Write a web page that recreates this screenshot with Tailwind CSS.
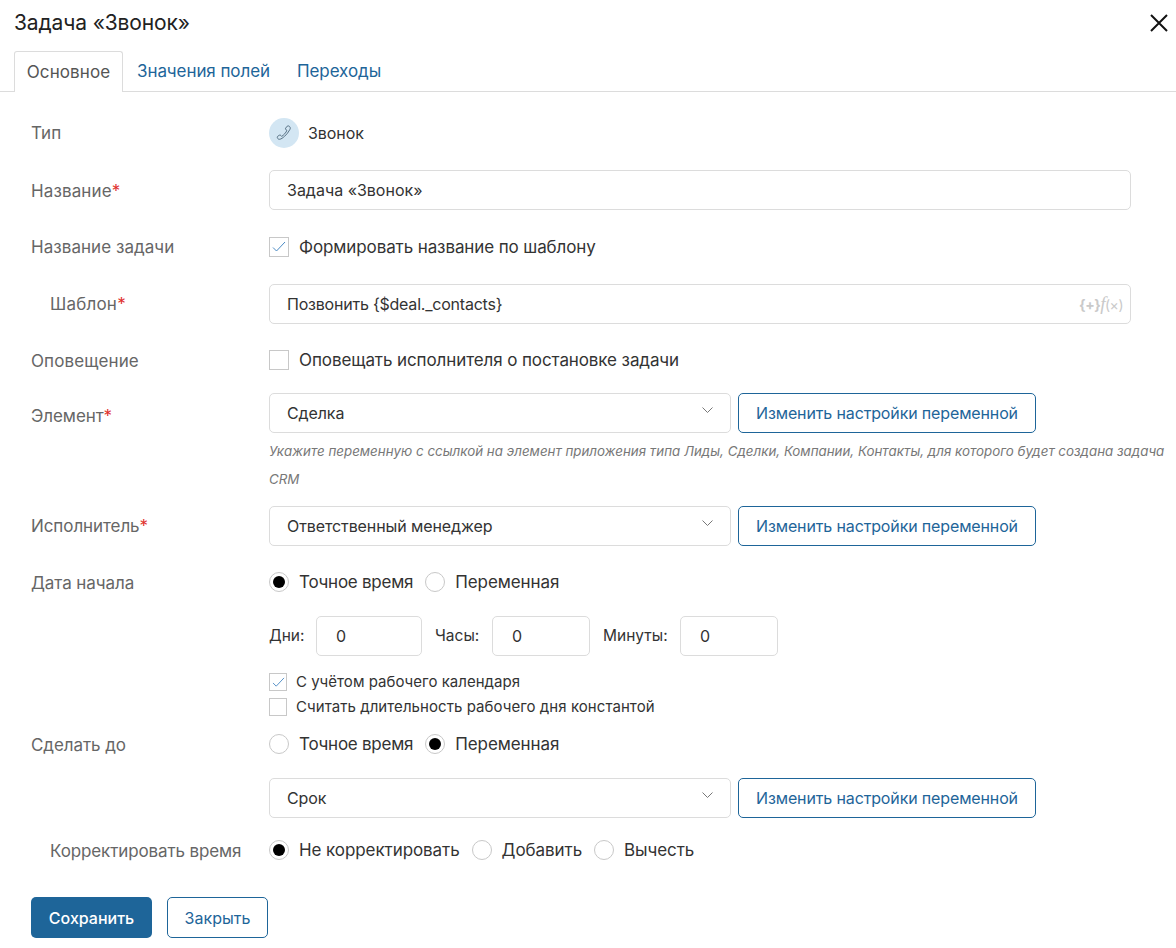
<!DOCTYPE html>
<html lang="ru">
<head>
<meta charset="utf-8">
<script src="https://cdn.jsdelivr.net/npm/@tailwindcss/browser@4"></script>
</head>
<body class="bg-white font-['Inter',sans-serif] text-[17px] tracking-[-0.08px] text-[#333] w-[1176px] h-[948px] overflow-hidden">
<header class="h-[51px] pl-[14px] pr-[8px] flex items-start justify-between">
  <h1 class="text-[21px] tracking-[-0.13px] leading-[24px] mt-[11px] text-[#222] font-normal">Задача «Звонок»</h1>
  <svg class="mt-[14px]" width="18" height="18" viewBox="0 0 18 18" fill="none" stroke="#111" stroke-width="2"><path d="M1 1l16 16M17 1L1 17"/></svg>
</header>
<nav class="h-[41px] pl-[14px] flex border-b border-[#dcdcdc]">
  <div class="h-[41px] w-[109px] pt-[2px] flex items-center justify-center border border-b-0 border-[#dcdcdc] rounded-t-[3px] bg-white text-[#555] tracking-[0.1px]">Основное</div>
  <a class="ml-[14px] h-[40px] pt-[2px] flex items-center text-[#1e6599]">Значения полей</a>
  <a class="ml-[27px] h-[40px] pt-[2px] flex items-center text-[#1e6599]">Переходы</a>
</nav>
<main class="pl-[31px]">
  <div class="flex items-center h-[40px] mt-[21px]">
    <div class="w-[238px] pt-[2px] text-[#666] tracking-[0.1px]">Тип</div>
    <span class="w-[30px] h-[30px] rounded-full bg-[#d3e6f3] flex items-center justify-center">
      <svg width="16" height="16" viewBox="0 0 16 16" fill="none" stroke="#4a6478" stroke-width="0.9"><path d="M11.2 1.2c1-.6 1.900-.3 2.600.6.7.9.6 1.900-.1 3-1.300 2.400-3 4.700-5.100 6.500-1.700 1.500-3.400 2.800-5 3-1 .1-1.900-.5-2.200-1.400-.3-.8 0-1.500.7-1.900l1.300-.8c.6-.3 1.100-.2 1.500.3l.7.9c1.800-.9 4.600-4 5.300-6l-1-.7c-.5-.4-.6-.9-.3-1.500z"/></svg>
    </span>
    <span class="ml-[9px] text-[16px] text-[#333]">Звонок</span>
  </div>
  <div class="flex items-center h-[40px] mt-[17px]">
    <div class="w-[238px] pt-[4px] text-[#666] tracking-[0.12px]">Название<span class="text-[#e0312d]">*</span></div>
    <div class="w-[862px] h-[40px] border border-[#dcdcdc] rounded-[5px] pl-[17px] flex items-center text-[16px] tracking-[0px]">Задача «Звонок»</div>
  </div>
  <div class="flex items-center h-[24px] mt-[25px]">
    <div class="w-[238px] pt-[2px] text-[#666] tracking-[0.05px]">Название задачи</div>
    <span class="w-[20px] h-[20px] border border-[#c8c8c8] flex items-center justify-center">
      <svg width="14" height="12" viewBox="0 0 14 12" fill="none" stroke="#4a8ac4" stroke-width="1"><path d="M1 6.500l3.500 3.500L13 1"/></svg>
    </span>
    <span class="ml-[10px] pt-[2px] tracking-[-0.11px]">Формировать название по шаблону</span>
  </div>
  <div class="flex items-center h-[40px] mt-[25px]">
    <div class="w-[238px] pl-[19px] pt-[2px] text-[#666] tracking-[0.2px]">Шаблон<span class="text-[#e0312d]">*</span></div>
    <div class="w-[862px] h-[40px] border border-[#dcdcdc] rounded-[5px] pl-[17px] pr-[7px] flex items-center justify-between">
      <span class="text-[16px] tracking-[-0.22px]">Позвонить {$deal._contacts}</span>
      <span class="text-[14px] leading-[16px] tracking-[-0.5px] text-[#c9c9c9]"><b>{+}</b><i class="font-['Liberation_Serif',serif] text-[19px]">f</i>(×)</span>
    </div>
  </div>
  <div class="flex items-center h-[24px] mt-[24px]">
    <div class="w-[238px] pt-[4px] text-[#666] tracking-[0.12px]">Оповещение</div>
    <span class="w-[20px] h-[20px] border border-[#c8c8c8]"></span>
    <span class="ml-[10px] pt-[2px] tracking-[-0.1px]">Оповещать исполнителя о постановке задачи</span>
  </div>
  <div class="flex items-center h-[40px] mt-[21px]">
    <div class="w-[238px] pt-[8px] text-[#666]">Элемент<span class="text-[#e0312d]">*</span></div>
    <div class="w-[462px] h-[40px] border border-[#dcdcdc] rounded-[5px] pl-[17px] pr-[17px] flex items-center justify-between text-[16px] tracking-[-0.1px]">
      <span>Сделка</span>
      <svg class="mt-[-6px]" width="11" height="6" viewBox="0 0 11 6" fill="none" stroke="#777" stroke-width="1"><path d="M.5.5l5 5 5-5"/></svg>
    </div>
    <button class="ml-[7px] w-[298px] h-[40px] border border-[#1e6599] rounded-[5px] text-[#1e6599] text-[16px] tracking-[-0.14px]">Изменить настройки переменной</button>
  </div>
  <p class="ml-[238px] mt-[4px] w-[900px] text-[13.35px] tracking-[0px] leading-[28px] italic text-[#777]">Укажите переменную с ссылкой на элемент приложения типа Лиды, Сделки, Компании, Контакты, для которого будет создана задача CRM</p>
  <div class="flex items-center h-[40px] mt-[13px]">
    <div class="w-[238px] pt-[2px] text-[#666]">Исполнитель<span class="text-[#e0312d]">*</span></div>
    <div class="w-[462px] h-[40px] border border-[#dcdcdc] rounded-[5px] pl-[17px] pr-[17px] flex items-center justify-between text-[16px] tracking-[-0.1px]">
      <span>Ответственный менеджер</span>
      <svg class="mt-[-6px]" width="11" height="6" viewBox="0 0 11 6" fill="none" stroke="#777" stroke-width="1"><path d="M.5.5l5 5 5-5"/></svg>
    </div>
    <button class="ml-[7px] w-[298px] h-[40px] border border-[#1e6599] rounded-[5px] text-[#1e6599] text-[16px] tracking-[-0.14px]">Изменить настройки переменной</button>
  </div>
  <div class="flex items-center h-[24px] mt-[24px]">
    <div class="w-[238px] pt-[4px] text-[#666]">Дата начала</div>
    <span class="w-[20px] h-[20px] rounded-full border border-[#c8c8c8] flex items-center justify-center"><span class="w-[12px] h-[12px] rounded-full bg-black"></span></span>
    <span class="ml-[10px] pt-[2px] tracking-[-0.25px]">Точное время</span>
    <span class="ml-[12px] w-[20px] h-[20px] rounded-full border border-[#c8c8c8]"></span>
    <span class="ml-[10px] pt-[2px]">Переменная</span>
  </div>
  <div class="flex items-center h-[40px] mt-[22px] ml-[238px] text-[15.5px] tracking-[0px]">
    <span class="w-[35px]">Дни:</span>
    <div class="ml-[12px] w-[106px] h-[40px] border border-[#dcdcdc] rounded-[5px] pl-[19px] flex items-center text-[16px]">0</div>
    <span class="ml-[13px] w-[45px]">Часы:</span>
    <div class="ml-[12px] w-[98px] h-[40px] border border-[#dcdcdc] rounded-[5px] pl-[19px] flex items-center text-[16px]">0</div>
    <span class="ml-[13px] w-[65px]">Минуты:</span>
    <div class="ml-[12px] w-[98px] h-[40px] border border-[#dcdcdc] rounded-[5px] pl-[19px] flex items-center text-[16px]">0</div>
  </div>
  <div class="flex items-center h-[18px] mt-[17px] ml-[238px] text-[15px] tracking-[0.03px]">
    <span class="w-[18px] h-[18px] border border-[#c8c8c8] flex items-center justify-center">
      <svg width="13" height="11" viewBox="0 0 14 12" fill="none" stroke="#4a8ac4" stroke-width="1"><path d="M1 6.500l3.500 3.500L13 1"/></svg>
    </span>
    <span class="ml-[9px]">С учётом рабочего календаря</span>
  </div>
  <div class="flex items-center h-[18px] mt-[7px] ml-[238px] text-[15px] tracking-[0.06px]">
    <span class="w-[18px] h-[18px] border border-[#c8c8c8]"></span>
    <span class="ml-[9px]">Считать длительность рабочего дня константой</span>
  </div>
  <div class="flex items-center h-[24px] mt-[16px]">
    <div class="w-[238px] pt-[4px] text-[#666]">Сделать до</div>
    <span class="w-[20px] h-[20px] rounded-full border border-[#c8c8c8]"></span>
    <span class="ml-[10px] pt-[2px] tracking-[-0.25px]">Точное время</span>
    <span class="ml-[12px] w-[20px] h-[20px] rounded-full border border-[#c8c8c8] flex items-center justify-center"><span class="w-[12px] h-[12px] rounded-full bg-black"></span></span>
    <span class="ml-[10px] pt-[2px]">Переменная</span>
  </div>
  <div class="flex items-center h-[40px] mt-[22px] ml-[238px]">
    <div class="w-[462px] h-[40px] border border-[#dcdcdc] rounded-[5px] pl-[17px] pr-[17px] flex items-center justify-between text-[16px] tracking-[-0.1px]">
      <span>Срок</span>
      <svg class="mt-[-6px]" width="11" height="6" viewBox="0 0 11 6" fill="none" stroke="#777" stroke-width="1"><path d="M.5.5l5 5 5-5"/></svg>
    </div>
    <button class="ml-[7px] w-[298px] h-[40px] border border-[#1e6599] rounded-[5px] text-[#1e6599] text-[16px] tracking-[-0.14px]">Изменить настройки переменной</button>
  </div>
  <div class="flex items-center h-[24px] mt-[20px]">
    <div class="w-[238px] pl-[19px] pt-[4px] text-[#666] tracking-[-0.12px]">Корректировать время</div>
    <span class="w-[20px] h-[20px] rounded-full border border-[#c8c8c8] flex items-center justify-center"><span class="w-[12px] h-[12px] rounded-full bg-black"></span></span>
    <span class="ml-[10px] pt-[2px]">Не корректировать</span>
    <span class="ml-[12px] w-[20px] h-[20px] rounded-full border border-[#c8c8c8]"></span>
    <span class="ml-[10px] pt-[2px]">Добавить</span>
    <span class="ml-[12px] w-[20px] h-[20px] rounded-full border border-[#c8c8c8]"></span>
    <span class="ml-[10px] pt-[2px]">Вычесть</span>
  </div>
  <div class="flex mt-[35px] text-[16px] tracking-[0px]">
    <button class="w-[121px] h-[41px] bg-[#1e6599] rounded-[5px] text-white font-medium">Сохранить</button>
    <button class="ml-[15px] w-[101px] h-[41px] border border-[#1e6599] rounded-[5px] text-[#1e6599]">Закрыть</button>
  </div>
</main>
</body>
</html>
